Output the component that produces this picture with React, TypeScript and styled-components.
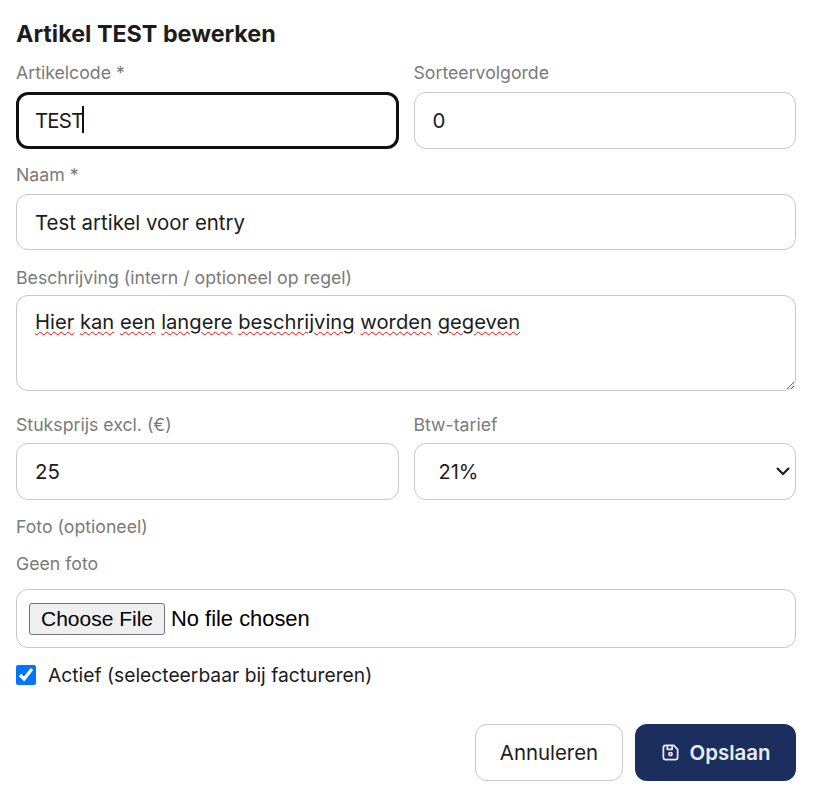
import React from 'react';
import styled, { createGlobalStyle } from 'styled-components';

const GlobalStyle = createGlobalStyle`
    body {
        margin: 0;
        background: #FFFFFF;
        font-family: 'Inter', 'Liberation Sans', sans-serif;
    }
`

const Page = styled.form`
    width: 780px;
    padding: 18px 23px 27px 16px;
    display: flex;
    flex-direction: column;
`
const Title = styled.h2`
    margin: 0 0 11.25px 0;
    font-size: 23.3px;
    line-height: 32px;
    font-weight: 700;
    color: #1C1C1C;
`
const Row = styled.div`
    display: grid;
    grid-template-columns: 1fr 1fr;
    column-gap: 15px;
`
const Field = styled.div<{ $after?: number }>`
    display: flex;
    flex-direction: column;
    min-width: 0;
    margin-bottom: ${(p) => p.$after ?? 14}px;
`
const Label = styled.label<{ $gap?: number }>`
    font-size: 17.7px;
    line-height: 24px;
    color: #7A7A7A;
    margin-top: ${(p) => 5 - (p.$gap ?? 5)}px;
    margin-bottom: ${(p) => (p.$gap ?? 5) + 2}px;
`
const InputWrap = styled.div`
    position: relative;
`
const Input = styled.input<{ $tight?: boolean }>`
    box-sizing: border-box;
    width: 100%;
    height: 56.5px;
    padding: 0 18px;
    border: 1px solid #C8C8C8;
    border-radius: 12px;
    background: #FFFFFF;
    font-family: inherit;
    font-size: 20.4px;
    letter-spacing: ${(p) => (p.$tight ? '-0.8px' : 'normal')};
    color: #1C1C1C;
    caret-color: transparent;
    &:focus {
        outline: none;
        border: 3px solid #111111;
        padding: 0 16px;
    }
`
const Caret = styled.span`
    position: absolute;
    left: 66px;
    top: 14px;
    width: 2px;
    height: 27px;
    background: #111111;
`
const TextArea = styled.div`
    box-sizing: border-box;
    height: 96px;
    padding: 11px 18px;
    border: 1px solid #C8C8C8;
    border-radius: 12px;
    font-size: 20.2px;
    line-height: 30px;
    color: #1C1C1C;
    overflow: auto;
    resize: vertical;
`
const Misspelled = styled.span`
    text-decoration: underline wavy #FF0000 1.3px;
    text-underline-offset: 2px;
`
const SelectWrap = styled.div`
    position: relative;
`
const Select = styled.select`
    box-sizing: border-box;
    width: 100%;
    height: 56.5px;
    padding: 0 24px;
    appearance: none;
    border: 1px solid #C8C8C8;
    border-radius: 12px;
    background: #FFFFFF;
    font-family: inherit;
    font-size: 20px;
    color: #1C1C1C;
`
const Chevron = styled.svg`
    position: absolute;
    right: 5px;
    top: 22px;
    width: 16px;
    height: 12px;
    pointer-events: none;
`
const PhotoBlock = styled.div`
    padding-top: 1.5px;
`
const PlainText = styled.div`
    font-size: 17.7px;
    line-height: 24px;
    color: #7A7A7A;
    margin-bottom: 13px;
`
const FileBox = styled.div`
    box-sizing: border-box;
    height: 59px;
    padding: 0 12px;
    display: flex;
    align-items: center;
    border: 1px solid #C8C8C8;
    border-radius: 12px;
`
const FileInput = styled.input`
    width: 100%;
    font-family: 'Liberation Sans', Arial, sans-serif;
    font-size: 21.9px;
    color: #000000;
    &::file-selector-button {
        font-family: inherit;
        font-size: 21px;
        height: 32px;
        width: 136px;
        padding: 0;
        margin-right: 6px;
        background: #EFEFEF;
        border: 1px solid #767676;
        border-radius: 3px;
        color: #000000;
    }
`
const CheckRow = styled.label`
    display: flex;
    align-items: center;
    gap: 12px;
    margin: 14px 0 35.75px;
    font-size: 19.25px;
    line-height: 26px;
    color: #1C1C1C;
`
const Checkbox = styled.input`
    width: 20px;
    height: 20px;
    margin: 0;
    accent-color: #0075FF;
`
const Actions = styled.div`
    display: flex;
    justify-content: flex-end;
    gap: 12px;
`
const CancelButton = styled.button`
    box-sizing: border-box;
    width: 148px;
    height: 57px;
    background: #FFFFFF;
    border: 1px solid #C8C8C8;
    border-radius: 12px;
    font-family: inherit;
    font-size: 20.4px;
    color: #1C1C1C;
`
const SaveButton = styled.button`
    box-sizing: border-box;
    width: 161px;
    height: 57px;
    display: flex;
    align-items: center;
    justify-content: center;
    gap: 10px;
    background: #1B2E5E;
    border: none;
    border-radius: 12px;
    font-family: inherit;
    font-size: 20.4px;
    font-weight: 600;
    color: #E8ECF4;
`

const App = () => {
    const words = ['Hier', 'kan', 'een', 'langere', 'beschrijving', 'worden', 'gegeven'];
    return (
        <>
            <GlobalStyle />
            <Page onSubmit={(e) => e.preventDefault()}>
                <Title>Artikel TEST bewerken</Title>
                <Row>
                    <Field>
                        <Label htmlFor='code'>Artikelcode *</Label>
                        <InputWrap>
                            <Input id='code' type='text' defaultValue='TEST' $tight autoFocus />
                            <Caret />
                        </InputWrap>
                    </Field>
                    <Field>
                        <Label htmlFor='sort'>Sorteervolgorde</Label>
                        <Input id='sort' type='text' defaultValue='0' />
                    </Field>
                </Row>
                <Field>
                    <Label htmlFor='name'>Naam *</Label>
                    <Input id='name' type='text' defaultValue='Test artikel voor entry' />
                </Field>
                <Field $after={21}>
                    <Label $gap={3}>Beschrijving (intern / optioneel op regel)</Label>
                    <TextArea>
                        {words.map((word, i) => (
                            <React.Fragment key={word}>
                                {i > 0 && ' '}
                                <Misspelled>{word}</Misspelled>
                            </React.Fragment>
                        ))}
                    </TextArea>
                </Field>
                <Row>
                    <Field>
                        <Label $gap={4} htmlFor='price'>Stuksprijs excl. (€)</Label>
                        <Input id='price' type='text' defaultValue='25' />
                    </Field>
                    <Field>
                        <Label $gap={4} htmlFor='vat'>Btw-tarief</Label>
                        <SelectWrap>
                            <Select id='vat' defaultValue='21'>
                                <option value='21'>21%</option>
                                <option value='9'>9%</option>
                                <option value='0'>0%</option>
                            </Select>
                            <Chevron viewBox='0 0 16 12' fill='none' stroke='#1C1C1C' strokeWidth='2.2'>
                                <path d='M2 3l6 6 6-6' />
                            </Chevron>
                        </SelectWrap>
                    </Field>
                </Row>
                <PhotoBlock>
                    <PlainText>Foto (optioneel)</PlainText>
                    <PlainText>Geen foto</PlainText>
                    <FileBox>
                        <FileInput type='file' />
                    </FileBox>
                </PhotoBlock>
                <CheckRow>
                    <Checkbox type='checkbox' defaultChecked />
                    Actief (selecteerbaar bij factureren)
                </CheckRow>
                <Actions>
                    <CancelButton type='button'>Annuleren</CancelButton>
                    <SaveButton type='submit'>
                        <svg width='19' height='19' viewBox='0 0 24 24' fill='none' stroke='currentColor' strokeWidth='2.2' strokeLinecap='round' strokeLinejoin='round'>
                            <path d='M6 3h10l5 5v10a3 3 0 0 1-3 3H6a3 3 0 0 1-3-3V6a3 3 0 0 1 3-3z' />
                            <circle cx='12' cy='14' r='2' />
                            <path d='M14 4v4H8V4' />
                        </svg>
                        Opslaan
                    </SaveButton>
                </Actions>
            </Page>
        </>
    )
}

export default App;
